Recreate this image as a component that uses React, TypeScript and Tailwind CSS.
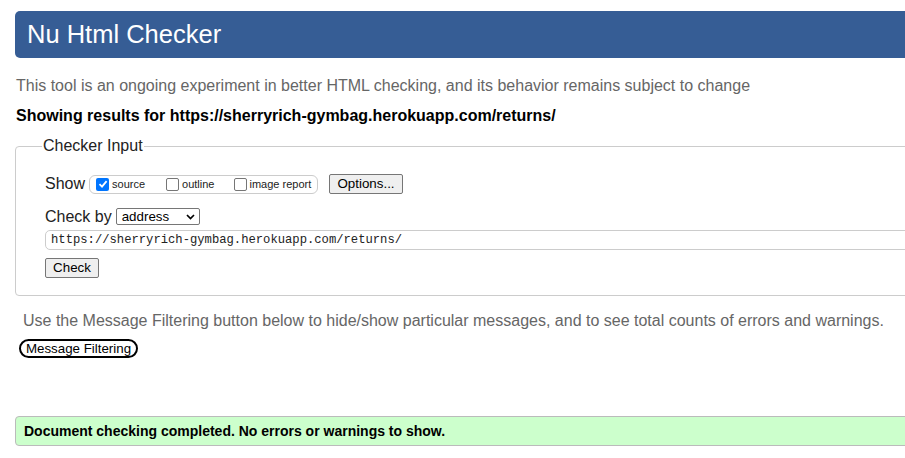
import React from "react";

function Box({ checked }: { checked?: boolean }) {
  if (checked) {
    return (
      <span className="flex h-[13px] w-[13px] shrink-0 items-center justify-center rounded-[2px] bg-[#0075ff]">
        <svg width="10" height="10" viewBox="0 0 10 10">
          <path d="M1.5 5.2 L4 7.6 L8.6 2.2" fill="none" stroke="#fff" strokeWidth="1.8" />
        </svg>
      </span>
    );
  }
  return <span className="block h-[13px] w-[13px] shrink-0 rounded-[2px] border border-[#767676] bg-white" />;
}

export default function App() {
  return (
    <div className="relative h-[458px] w-[905px] overflow-hidden bg-white font-['Liberation_Sans',Arial,sans-serif]">
      <div className="w-[1100px] pl-[15px]">
        <div className="mt-[11px] flex h-[47px] items-center rounded-l-[5px] bg-[#365d95] pl-[12px] text-[25.5px] text-white">
          Nu Html Checker
        </div>
        <div className="mt-[19px] h-[18px] pl-px text-[16px] leading-[18px] text-[#666]">
          This tool is an ongoing experiment in better HTML checking, and its behavior remains subject to change
        </div>
        <div className="mt-[12px] h-[18px] pl-px text-[16px] font-bold leading-[18px] text-black">
          Showing results for https://sherryrich-gymbag.herokuapp.com/returns/
        </div>
        <fieldset className="mt-[12px] rounded-[4px] border border-[#ccc] pb-[17px] pl-[29px]">
          <legend className="-ml-[3px] px-px text-[16px] leading-[18px] text-[#222]">Checker Input</legend>
          <div className="mt-[19px] flex h-[20px] items-center">
            <span className="text-[16px] leading-[18px] text-[#222]">Show</span>
            <div className="ml-[4px] flex h-[19px] w-[229px] items-center rounded-[6px] border border-[#ccc] pl-[6px] text-[11px] text-[#222]">
              <Box checked />
              <span className="ml-[3px]">source</span>
              <div className="ml-[21px] flex">
                <Box />
              </div>
              <span className="ml-[3px]">outline</span>
              <div className="ml-[20px] flex">
                <Box />
              </div>
              <span className="ml-[2px]">image report</span>
            </div>
            <div className="ml-[11px] flex h-[20px] w-[74px] items-center justify-center rounded-[2px] border border-[#767676] bg-[#efefef] text-[13.33px] text-black">
              Options...
            </div>
          </div>
          <div className="mt-[13px] flex h-[19px] items-center">
            <span className="text-[16px] leading-[18px] text-[#222]">Check by</span>
            <div className="ml-[4px] flex h-[17px] w-[84px] items-center justify-between rounded-[2px] border border-[#767676] bg-white pl-[5px] pr-[4px] text-[13.33px] text-black">
              <span>address</span>
              <svg width="9" height="6" viewBox="0 0 9 6">
                <path d="M1 1 L4.5 4.5 L8 1" fill="none" stroke="#000" strokeWidth="1.7" />
              </svg>
            </div>
          </div>
          <div className="mt-[4px] flex h-[20px] items-center rounded-l-[5px] border border-[#ccc] pl-[5px] font-['Liberation_Mono',monospace] text-[12.2px] text-[#222]">
            https://sherryrich-gymbag.herokuapp.com/returns/
          </div>
          <div className="mt-[8px] flex h-[20px] w-[54px] items-center justify-center rounded-[2px] border border-[#767676] bg-[#efefef] text-[13.33px] text-black">
            Check
          </div>
        </fieldset>
        <div className="mt-[16px] h-[18px] pl-[8px] text-[16px] leading-[18px] text-[#666]">
          Use the Message Filtering button below to hide/show particular messages, and to see total counts of errors and warnings.
        </div>
        <div className="ml-[4px] mt-[9px] flex h-[19px] w-[119px] items-center justify-center rounded-[10px] border-2 border-black bg-white text-[13.33px] text-black">
          Message Filtering
        </div>
        <div className="mt-[58px] flex h-[30px] items-center rounded-l-[4px] border border-[#bbb] bg-[#ccffcc] pl-[8px] text-[14px] font-bold text-black">
          Document checking completed. No errors or warnings to show.
        </div>
      </div>
    </div>
  );
}
